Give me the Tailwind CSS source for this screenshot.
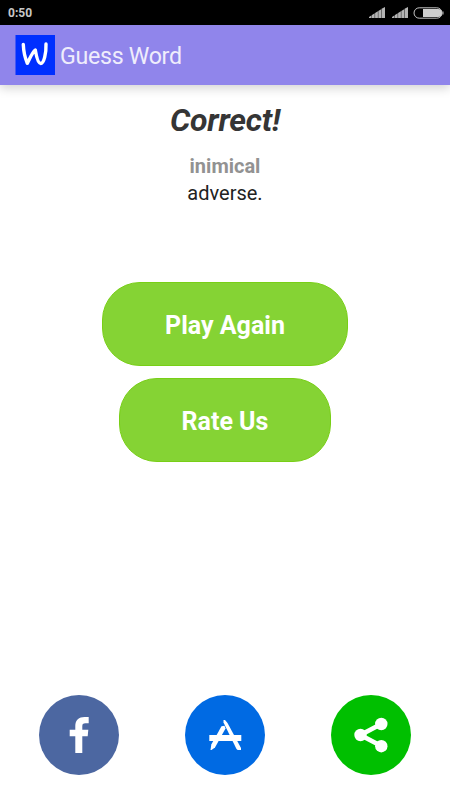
<!DOCTYPE html>
<html lang="en">
<head>
    <meta charset="UTF-8">
    <meta name="viewport" content="width=device-width, initial-scale=1.0">
    <title>Guess Word</title>
    <script src="https://cdn.jsdelivr.net/npm/@tailwindcss/browser@4"></script>
</head>
<body class="bg-white h-screen flex flex-col overflow-hidden font-[Roboto,sans-serif]">
    <!-- Status bar -->
    <div class="h-[25px] shrink-0 bg-black flex items-center justify-between pl-2 pr-[6px] text-[#c8c8c8]">
        <span class="text-xs font-bold">0:50</span>
        <div class="flex items-center gap-[7px]">
            <svg class="w-4 h-[11px]" viewBox="0 0 16 11" fill="#b4b4b4">
                <path d="M0 11V10L2.6 8.2V11zM3 11V8L5.7 6.3V11zM6.1 11V6L8.9 4.3V11zM9.3 11V4L12.2 2.2V11zM12.6 11V1.8L16 0V11z"/>
            </svg>
            <svg class="w-4 h-[11px]" viewBox="0 0 16 11" fill="#b4b4b4">
                <path d="M0 11V10L2.6 8.2V11zM3 11V8L5.7 6.3V11zM6.1 11V6L8.9 4.3V11zM9.3 11V4L12.2 2.2V11zM12.6 11V1.8L16 0V11z"/>
            </svg>
            <svg class="w-[31px] h-3 -ml-[2px]" viewBox="0 0 31 12">
                <rect x="1" y=".8" width="28" height="10.4" rx="5.2" fill="none" stroke="#c4c4c4"/>
                <path d="M10 2h15a4 4 0 0 1 0 8H10z" fill="#cfcfcf"/>
                <path d="M30 4.5v3" stroke="#c4c4c4"/>
            </svg>
        </div>
    </div>

    <!-- App bar -->
    <header class="h-[60px] shrink-0 bg-[#9085eb] flex items-center pl-[15px] gap-[5px] shadow-[0_3px_10px_rgba(0,0,0,0.18)]">
        <svg class="w-10 h-10" viewBox="0 0 40 40">
            <path d="M.5 0H40V40H.5z" fill="#002fff"/>
            <path d="M8.3 9.5C8.5 15 10.5 24 12.3 28.3C14.5 24.5 17 17.5 20.3 15C21 19 22.5 28.5 25.7 28.5C29 28.5 31.3 18 31 9" fill="none" stroke="#fff" stroke-width="3.4" stroke-linecap="round" stroke-linejoin="round"/>
        </svg>
        <h1 class="text-[23.2px] leading-none tracking-[-0.3px] text-[#efedfc] pt-[3px]">Guess Word</h1>
    </header>

    <main class="flex-1 flex flex-col items-center">
        <h2 class="mt-[17px] text-[32px] leading-9 tracking-[-0.25px] font-bold italic text-[#353535]">Correct!</h2>
        <p class="mt-[15px] text-xl leading-[27px] font-bold text-[#929292]">inimical</p>
        <p class="text-xl leading-[27px] text-[#222]">adverse.</p>

        <button class="mt-[75px] w-[246px] h-[84px] rounded-[38px] bg-[#85d334] border border-[#78cf16] text-white text-[25px] font-bold pt-1">Play Again</button>
        <button class="mt-3 w-[212px] h-[84px] rounded-[38px] bg-[#85d334] border border-[#78cf16] text-white text-[25px] font-bold pt-1">Rate Us</button>
    </main>

    <!-- Social links -->
    <footer class="shrink-0 flex justify-between px-[39px] pb-[25px]">
        <a href="#" aria-label="Facebook">
            <svg class="w-20 h-20" viewBox="0 0 80 80">
                <circle cx="40" cy="40" r="40" fill="#4c67a1"/>
                <path d="M36.3 58V41.3H30.7V34.8H36.3V31C36.3 25 40 22 45.5 22H49.7V28.3H46.5C44 28.3 43.3 29 43.3 31.2V34.8H49.3L48.7 41.3H43.3V58z" fill="#fff"/>
            </svg>
        </a>
        <a href="#" aria-label="App store">
            <svg class="w-20 h-20" viewBox="0 0 80 80">
                <circle cx="40" cy="40" r="40" fill="#006ae3"/>
                <path d="M24.3 40H56.3V46H24.3z" fill="#fff"/>
                <path d="M38.5 25H40L42.5 28L56 53V55H52.7L51.5 54L38.5 27.5z" fill="#fff"/>
                <path d="M36.5 31.2L39.5 30.8L40.5 33.5L30 52.5L26.5 55H25.5L26.3 49.5z" fill="#fff"/>
            </svg>
        </a>
        <a href="#" aria-label="Share">
            <svg class="w-20 h-20" viewBox="0 0 80 80">
                <circle cx="40" cy="40" r="40" fill="#00bf00"/>
                <path d="M50.3 29L29.5 40L50.3 51" fill="none" stroke="#fff" stroke-width="4.8"/>
                <g fill="#fff">
                    <circle cx="50.3" cy="29" r="6.2"/>
                    <circle cx="29.5" cy="40" r="6.2"/>
                    <circle cx="50.3" cy="51.2" r="6.2"/>
                </g>
            </svg>
        </a>
    </footer>
</body>
</html>
